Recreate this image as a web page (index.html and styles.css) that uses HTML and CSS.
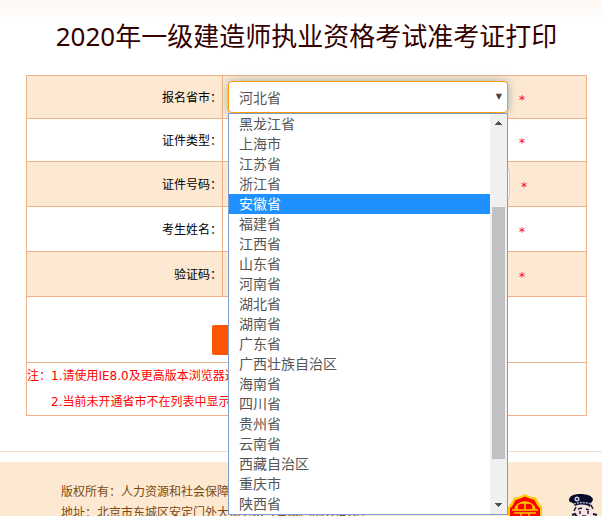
FILE: index.html
```
<!DOCTYPE html>
<html lang="zh-CN">
<head>
    <meta charset="UTF-8">
    <meta name="viewport" content="width=device-width, initial-scale=1.0">
    <title>准考证打印</title>
    <link rel="stylesheet" href="styles.css">
</head>
<body>
    <main>
        <h1>2020年一级建造师执业资格考试准考证打印</h1>
        <form id="printForm">
            <table class="form-table">
                <tr class="odd">
                    <th><label for="province">报名省市：</label></th>
                    <td>
                        <div class="field">
                            <div class="dropdown open">
                                <select id="province" name="province">
                                    <option>河北省</option>
                                </select>
                                <div class="menu">
                                    <ul class="options" role="listbox" aria-label="报名省市">
                                        <li role="option">黑龙江省</li>
                                        <li role="option">上海市</li>
                                        <li role="option">江苏省</li>
                                        <li role="option">浙江省</li>
                                        <li role="option" class="active" aria-selected="true">安徽省</li>
                                        <li role="option">福建省</li>
                                        <li role="option">江西省</li>
                                        <li role="option">山东省</li>
                                        <li role="option">河南省</li>
                                        <li role="option">湖北省</li>
                                        <li role="option">湖南省</li>
                                        <li role="option">广东省</li>
                                        <li role="option">广西壮族自治区</li>
                                        <li role="option">海南省</li>
                                        <li role="option">四川省</li>
                                        <li role="option">贵州省</li>
                                        <li role="option">云南省</li>
                                        <li role="option">西藏自治区</li>
                                        <li role="option">重庆市</li>
                                        <li role="option">陕西省</li>
                                    </ul>
                                    <div class="scrollbar">
                                        <svg width="17" height="17" viewBox="0 0 17 17"><path d="M5 11h7v-1h-1v-1h-1v-1h-1v-1h-1v1h-1v1h-1v1h-1z" fill="#505050"/></svg>
                                        <div class="track"><div class="thumb"></div></div>
                                        <svg width="17" height="17" viewBox="0 0 17 17"><path d="M5 6h7v1h-1v1h-1v1h-1v1h-1v-1h-1v-1h-1v-1h-1z" fill="#505050"/></svg>
                                    </div>
                                </div>
                            </div>
                            <span class="required">*</span>
                        </div>
                    </td>
                </tr>
                <tr>
                    <th><label for="idType">证件类型：</label></th>
                    <td>
                        <div class="field">
                            <div class="dropdown">
                                <select id="idType" name="idType">
                                    <option>居民身份证</option>
                                </select>
                            </div>
                            <span class="required">*</span>
                        </div>
                    </td>
                </tr>
                <tr class="odd tall">
                    <th><label for="idNumber">证件号码：</label></th>
                    <td>
                        <div class="field">
                            <input type="text" id="idNumber" name="idNumber" class="wide">
                            <span class="required">*</span>
                        </div>
                    </td>
                </tr>
                <tr class="tall">
                    <th><label for="userName">考生姓名：</label></th>
                    <td>
                        <div class="field">
                            <input type="text" id="userName" name="userName">
                            <span class="required">*</span>
                        </div>
                    </td>
                </tr>
                <tr class="odd tall">
                    <th><label for="captcha">验证码：</label></th>
                    <td>
                        <div class="field">
                            <input type="text" id="captcha" name="captcha">
                            <span class="required">*</span>
                        </div>
                    </td>
                </tr>
                <tr class="actions">
                    <td colspan="2"><button type="submit">打印</button></td>
                </tr>
                <tr class="notes">
                    <td colspan="2">
                        <p>注：1.请使用IE8.0及更高版本浏览器进行访问。</p>
                        <p class="indent">2.当前未开通省市不在列表中显示。</p>
                    </td>
                </tr>
            </table>
        </form>
    </main>

    <footer>
        <div class="footer-inner">
            <div class="copyright">
                <p>版权所有：人力资源和社会保障部人事考试中心</p>
                <p>地址：北京市东城区安定门外大街138号皇城国际大厦B座</p>
            </div>
            <div class="badges">
                <svg width="34" height="40" viewBox="0 0 34 40">
                    <path d="M17 0l5 2.500 6 1 2.500 5L34 13v8l-1 9-16 10L1 30 0 21v-8l3.500-4.500L6 3.500l6-1z" fill="#fc0"/>
                    <path d="M17 2.500l4.500 2 5 1.500 2.500 5 3 3.500V22l-1 7-14 9-14-9-1-7v-7.500L5 11l2.500-5 5-1.500z" fill="#f00"/>
                    <path d="M7 15c1-4 5-7 10-7s9 3 10 7M17 8v7M13 9h8M4 16h26M6 19h22M9 12v4M25 12v4M13 19v9M21 19v9" fill="none" stroke="#fc0" stroke-width="1.500"/>
                </svg>
                <svg width="32" height="40" viewBox="0 0 32 40">
                    <path d="M7 10h17l3 9-5 11H10L5 19z" fill="#f7e3df"/>
                    <path d="M1 6c0-4 5-6 11-6 7 0 13 2 13 6l-2 3-1 4c-4-3-10-3-15-1L5 9C3 8 1 8 1 6z" fill="#0b0b2b"/>
                    <path d="M6 10c5-2 11-2 17 0" fill="none" stroke="#a9aec4" stroke-width="1.500" stroke-dasharray="2 1"/>
                    <circle cx="9" cy="5" r="2.500" fill="#c9cede"/>
                    <path d="M8 4l2 2M10 4l-2 2" stroke="#30345a"/>
                    <path d="M10 15l4-1M18 15l3 1M12 17v3M20 17v3M23 11l2 4M8 13l-2 4M14 22h4" fill="none" stroke="#222238" stroke-width="1.500"/>
                    <path d="M4 21l3-1 2 3M25 20l4 1" fill="none" stroke="#16162f" stroke-width="2"/>
                    <path d="M4 28l8-3h9l8 5v10H3z" fill="#151a40"/>
                </svg>
            </div>
        </div>
    </footer>
</body>
</html>
```
FILE: styles.css
```
* { box-sizing: border-box; }
body {
    margin: 0;
    min-height: 100vh;
    overflow-x: hidden;
    font-family: "DejaVu Sans", "Noto Sans CJK SC", sans-serif;
    font-size: 12px;
    color: #000;
    background: #fff linear-gradient(#fff8f3, #fff) no-repeat top / 100% 20px;
}
main { padding: 16px 15px 35px 26px; }
h1 {
    margin: 0 0 19px;
    font-family: "Noto Sans", "Noto Sans CJK SC", sans-serif;
    font-size: 26px;
    font-weight: normal;
    line-height: 40px;
    text-align: center;
    white-space: nowrap;
    color: #300;
}
p { margin: 0; }

/* form */
.form-table { width: 100%; border-collapse: collapse; table-layout: fixed; }
.form-table tr { height: 43px; }
.form-table .tall { height: 45px; }
.form-table .odd { background-color: #fde9d1; }
.form-table th, .form-table td { padding: 0; border: 1px solid #efb188; }
.form-table th { width: 35%; padding-bottom: 2px; font-weight: normal; text-align: right; }
.field { display: flex; align-items: center; gap: 11px; padding-left: 5px; }
.dropdown { position: relative; width: 280px; }
.dropdown::after {
    content: "▼";
    position: absolute;
    top: 0;
    right: 6px;
    font-size: 8px;
    line-height: 31px;
    color: #444;
    pointer-events: none;
}
select, input {
    display: block;
    width: 280px;
    height: 32px;
    padding: 0 10px;
    border: 1px solid #ccc;
    border-radius: 4px;
    background-color: #fff;
    font-family: "Noto Sans CJK SC", sans-serif;
    font-size: 14px;
    color: #555;
}
select { width: 100%; appearance: none; }
.wide { width: 282px; }
.open select { border-color: #f90; box-shadow: 0 0 8px rgba(82, 130, 150, 0.6); outline: none; }
.required { padding-top: 6px; line-height: 16px; color: #f00; }

/* opened list */
.menu {
    position: absolute;
    top: 100%;
    left: 0;
    z-index: 10;
    display: flex;
    width: 100%;
    border: 1px solid #7a9cd3;
    background-color: #fff;
}
.options {
    flex: 1;
    margin: 0;
    padding: 0;
    list-style: none;
    font-family: "Noto Sans CJK SC", sans-serif;
    font-size: 14px;
    line-height: 18px;
    color: #555;
}
.options li { height: 20px; padding-left: 10px; }
.options .active { background-color: #1e90ff; color: #fff; }
.scrollbar { display: flex; flex-direction: column; width: 17px; background-color: #f0f0f0; }
.track { flex: 1; padding: 76px 2px 0; }
.thumb { height: 252px; background-color: #c1c1c1; }

.form-table .actions { height: 66px; }
.actions td { text-align: center; }
button {
    width: 190px;
    height: 30px;
    border: none;
    border-radius: 2px;
    background-color: #f50;
    color: #fff;
    font-family: "Noto Sans CJK SC", sans-serif;
    font-size: 14px;
    cursor: pointer;
}
.actions button { margin-top: 20px; }
.form-table .notes { height: 53px; }
.notes p { line-height: 26px; color: #f00; }
.notes .indent { padding-left: 24px; }

/* footer */
footer { padding-top: 10px; border-top: 1px solid #f3dccb; }
.footer-inner {
    display: flex;
    justify-content: space-between;
    padding: 20px 2px 20px 61px;
    background-color: #fde9d1;
}
.copyright { line-height: 21px; color: #7b4a12; white-space: nowrap; }
.badges { display: flex; gap: 26px; padding-top: 12px; }
```
